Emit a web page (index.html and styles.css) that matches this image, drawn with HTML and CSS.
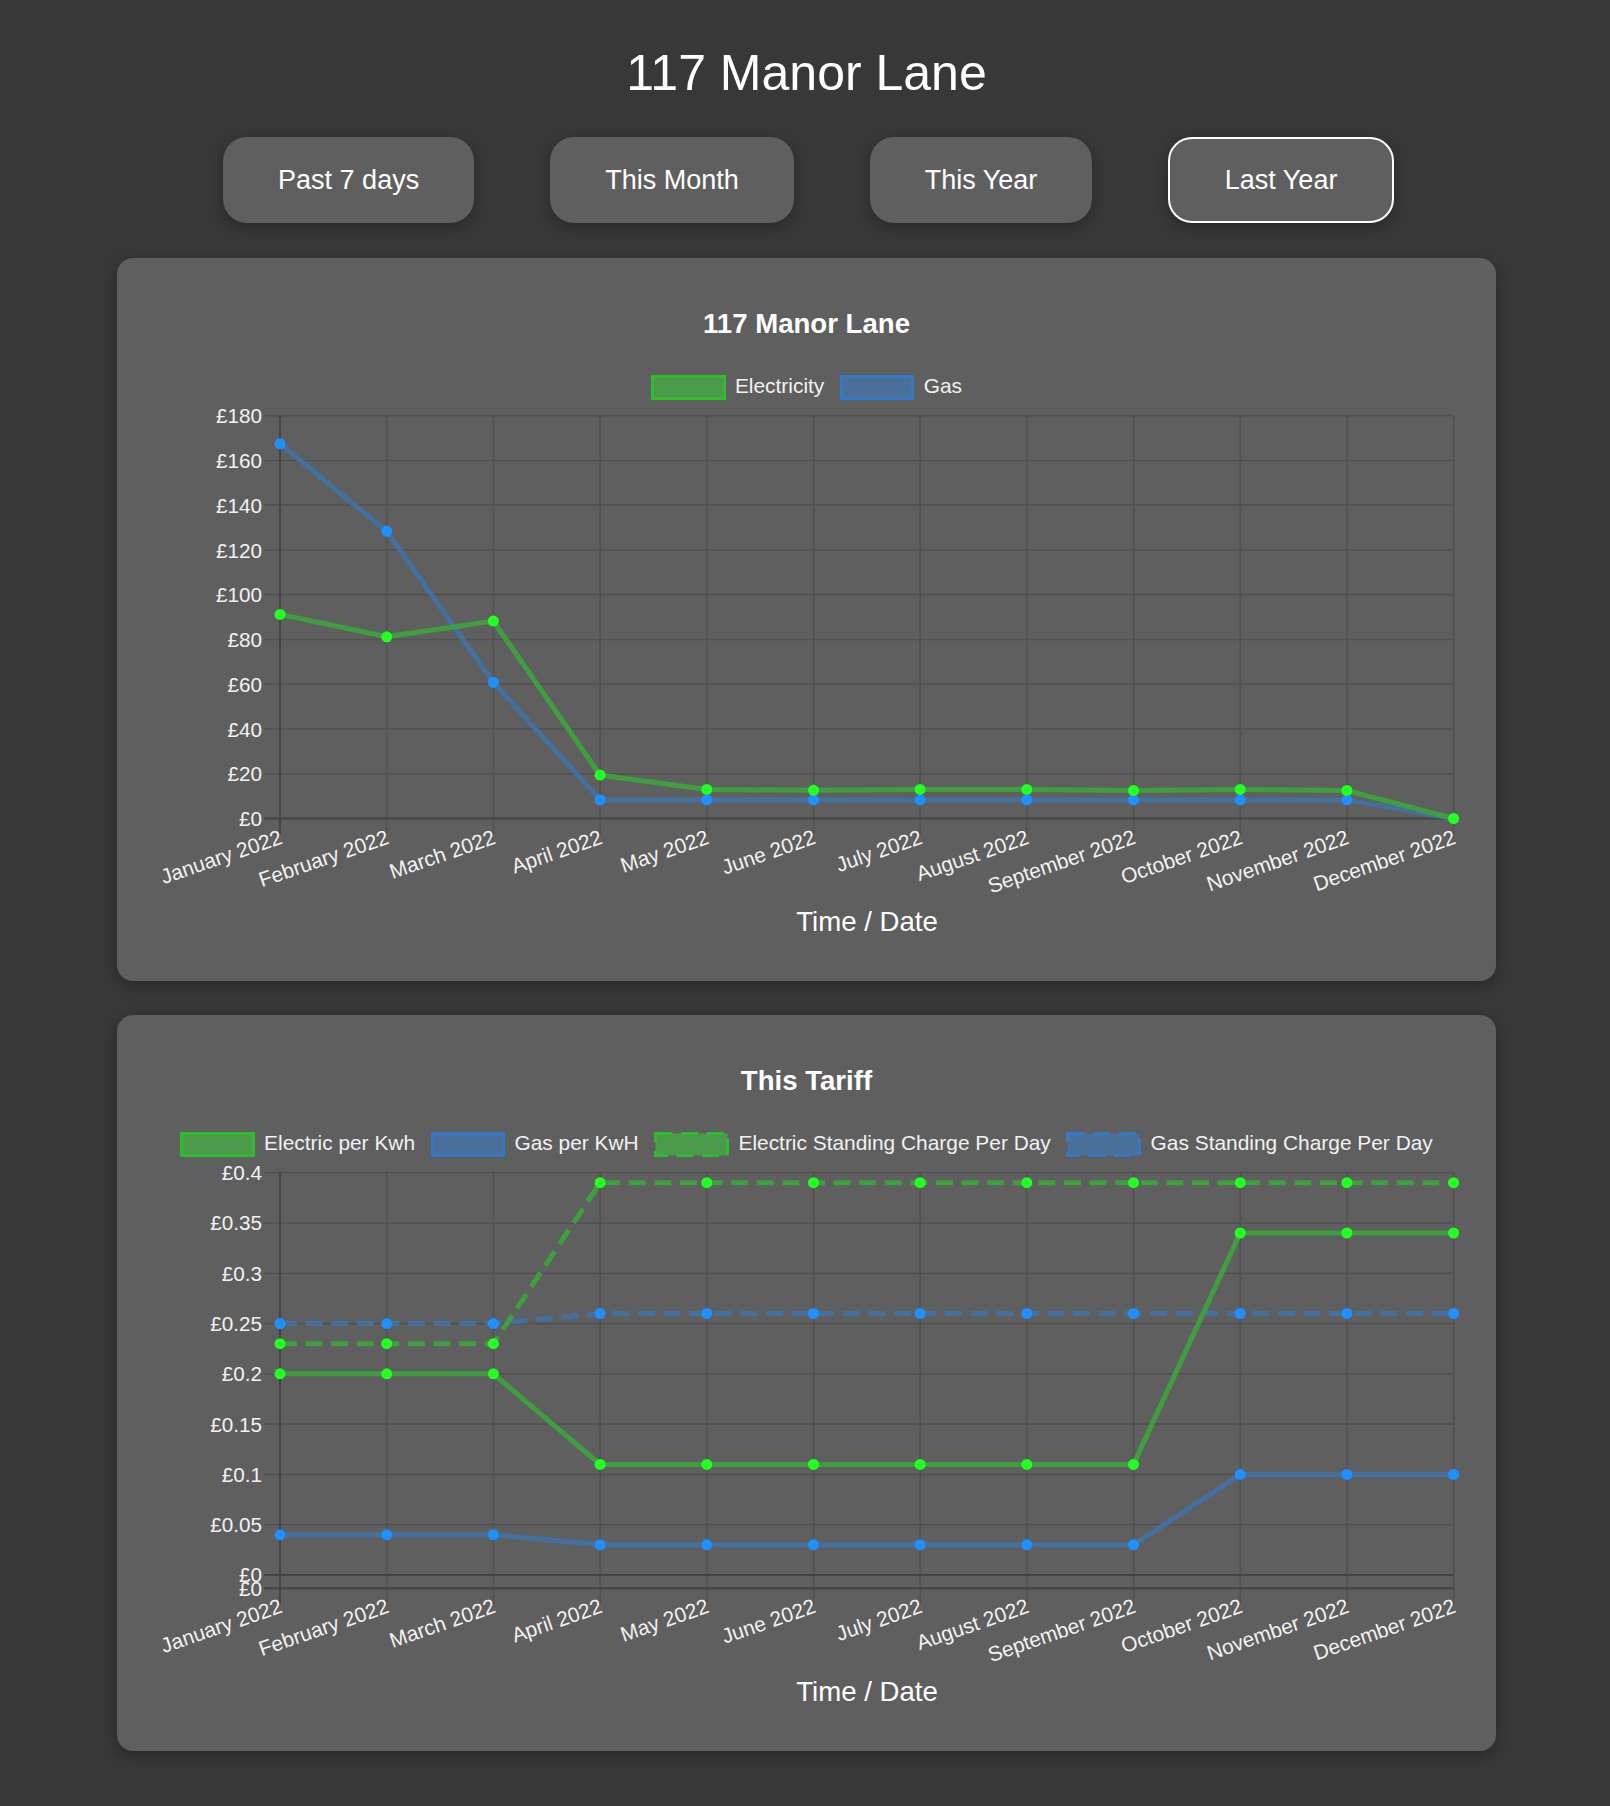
FILE: index.html
```html
<!DOCTYPE html>
<html lang="en">
<head>
<meta charset="utf-8">
<title>117 Manor Lane</title>
<link rel="stylesheet" href="styles.css">
</head>
<body>
<h1 class="page-title">117 Manor Lane</h1>
<div class="controls">
  <button class="range-btn">Past 7 days</button>
  <button class="range-btn">This Month</button>
  <button class="range-btn">This Year</button>
  <button class="range-btn active">Last Year</button>
</div>

<section class="card">
  <h2 class="chart-title">117 Manor Lane</h2>
  <ul class="legend">
    <li class="legend-item"><span class="swatch swatch-green"></span><span class="legend-label">Electricity</span></li>
    <li class="legend-item"><span class="swatch swatch-blue"></span><span class="legend-label">Gas</span></li>
  </ul>
  <svg class="plot" viewBox="117 400 1379 500" width="1379" height="500">
    <path class="grid" d="M264 415.7H1453.6M264 460.5H1453.6M264 505.2H1453.6M264 550H1453.6M264 594.7H1453.6M264 639.5H1453.6M264 684.2H1453.6M264 729H1453.6M264 773.8H1453.6"/>
    <path class="grid" d="M386.7 415.7V834.5M493.4 415.7V834.5M600.1 415.7V834.5M706.8 415.7V834.5M813.5 415.7V834.5M920.1 415.7V834.5M1026.8 415.7V834.5M1133.5 415.7V834.5M1240.2 415.7V834.5M1346.9 415.7V834.5M1453.6 415.7V834.5"/>
    <path class="axis" d="M264 818.5H1453.6M280 415.7V834.5"/>
    <g class="yl">
      <text x="262" y="415.7">£180</text>
      <text x="262" y="460.5">£160</text>
      <text x="262" y="505.2">£140</text>
      <text x="262" y="550">£120</text>
      <text x="262" y="594.7">£100</text>
      <text x="262" y="639.5">£80</text>
      <text x="262" y="684.2">£60</text>
      <text x="262" y="729">£40</text>
      <text x="262" y="773.8">£20</text>
      <text x="262" y="818.5">£0</text>
    </g>
    <g class="xl">
      <text transform="translate(281 836) rotate(-19)">January 2022</text>
      <text transform="translate(387.7 836) rotate(-19)">February 2022</text>
      <text transform="translate(494.4 836) rotate(-19)">March 2022</text>
      <text transform="translate(601.1 836) rotate(-19)">April 2022</text>
      <text transform="translate(707.8 836) rotate(-19)">May 2022</text>
      <text transform="translate(814.5 836) rotate(-19)">June 2022</text>
      <text transform="translate(921.1 836) rotate(-19)">July 2022</text>
      <text transform="translate(1027.8 836) rotate(-19)">August 2022</text>
      <text transform="translate(1134.5 836) rotate(-19)">September 2022</text>
      <text transform="translate(1241.2 836) rotate(-19)">October 2022</text>
      <text transform="translate(1347.9 836) rotate(-19)">November 2022</text>
      <text transform="translate(1454.6 836) rotate(-19)">December 2022</text>
    </g>
    <polyline class="line-blue" points="280,443.7 386.7,531.2 493.4,682.4 600.1,799.9 706.8,799.9 813.5,799.9 920.1,799.9 1026.8,799.9 1133.5,799.9 1240.2,799.9 1346.9,799.9 1453.6,818.5"/>
    <g class="pt-blue">
      <circle cx="280" cy="443.7" r="5.5"/><circle cx="386.7" cy="531.2" r="5.5"/><circle cx="493.4" cy="682.4" r="5.5"/><circle cx="600.1" cy="799.9" r="5.5"/><circle cx="706.8" cy="799.9" r="5.5"/><circle cx="813.5" cy="799.9" r="5.5"/><circle cx="920.1" cy="799.9" r="5.5"/><circle cx="1026.8" cy="799.9" r="5.5"/><circle cx="1133.5" cy="799.9" r="5.5"/><circle cx="1240.2" cy="799.9" r="5.5"/><circle cx="1346.9" cy="799.9" r="5.5"/><circle cx="1453.6" cy="818.5" r="5.5"/>
    </g>
    <polyline class="line-green" points="280,614.4 386.7,636.8 493.4,621.1 600.1,775.1 706.8,789.4 813.5,790.3 920.1,789.4 1026.8,789.4 1133.5,790.5 1240.2,789.4 1346.9,790.5 1453.6,818.5"/>
    <g class="pt-green">
      <circle cx="280" cy="614.4" r="5.5"/><circle cx="386.7" cy="636.8" r="5.5"/><circle cx="493.4" cy="621.1" r="5.5"/><circle cx="600.1" cy="775.1" r="5.5"/><circle cx="706.8" cy="789.4" r="5.5"/><circle cx="813.5" cy="790.3" r="5.5"/><circle cx="920.1" cy="789.4" r="5.5"/><circle cx="1026.8" cy="789.4" r="5.5"/><circle cx="1133.5" cy="790.5" r="5.5"/><circle cx="1240.2" cy="789.4" r="5.5"/><circle cx="1346.9" cy="790.5" r="5.5"/><circle cx="1453.6" cy="818.5" r="5.5"/>
    </g>
  </svg>
  <div class="axis-title">Time / Date</div>
</section>

<section class="card">
  <h2 class="chart-title">This Tariff</h2>
  <ul class="legend">
    <li class="legend-item"><span class="swatch swatch-green"></span><span class="legend-label">Electric per Kwh</span></li>
    <li class="legend-item"><span class="swatch swatch-blue"></span><span class="legend-label">Gas per KwH</span></li>
    <li class="legend-item"><svg class="swatch-svg" viewBox="0 0 75 25" width="75" height="25"><rect class="dash-green" x="1.5" y="1.5" width="72" height="22"/></svg><span class="legend-label">Electric Standing Charge Per Day</span></li>
    <li class="legend-item"><svg class="swatch-svg" viewBox="0 0 75 25" width="75" height="25"><rect class="dash-blue" x="1.5" y="1.5" width="72" height="22"/></svg><span class="legend-label">Gas Standing Charge Per Day</span></li>
  </ul>
  <svg class="plot" viewBox="117 1157 1379 512.8" width="1379" height="512.8">
    <path class="grid" d="M264 1172.7H1453.6M264 1223H1453.6M264 1273.3H1453.6M264 1323.6H1453.6M264 1373.9H1453.6M264 1424.2H1453.6M264 1474.4H1453.6M264 1524.7H1453.6"/>
    <path class="grid" d="M386.7 1172.7V1604.3M493.4 1172.7V1604.3M600.1 1172.7V1604.3M706.8 1172.7V1604.3M813.5 1172.7V1604.3M920.1 1172.7V1604.3M1026.8 1172.7V1604.3M1133.5 1172.7V1604.3M1240.2 1172.7V1604.3M1346.9 1172.7V1604.3M1453.6 1172.7V1604.3"/>
    <path class="axis" d="M264 1575H1453.6M264 1588.3H1453.6M280 1172.7V1604.3"/>
    <g class="yl">
      <text x="262" y="1172.7">£0.4</text>
      <text x="262" y="1223">£0.35</text>
      <text x="262" y="1273.3">£0.3</text>
      <text x="262" y="1323.6">£0.25</text>
      <text x="262" y="1373.9">£0.2</text>
      <text x="262" y="1424.2">£0.15</text>
      <text x="262" y="1474.4">£0.1</text>
      <text x="262" y="1524.7">£0.05</text>
      <text x="262" y="1575">£0</text>
      <text x="262" y="1588.3">£0</text>
    </g>
    <g class="xl">
      <text transform="translate(281 1605) rotate(-19)">January 2022</text>
      <text transform="translate(387.7 1605) rotate(-19)">February 2022</text>
      <text transform="translate(494.4 1605) rotate(-19)">March 2022</text>
      <text transform="translate(601.1 1605) rotate(-19)">April 2022</text>
      <text transform="translate(707.8 1605) rotate(-19)">May 2022</text>
      <text transform="translate(814.5 1605) rotate(-19)">June 2022</text>
      <text transform="translate(921.1 1605) rotate(-19)">July 2022</text>
      <text transform="translate(1027.8 1605) rotate(-19)">August 2022</text>
      <text transform="translate(1134.5 1605) rotate(-19)">September 2022</text>
      <text transform="translate(1241.2 1605) rotate(-19)">October 2022</text>
      <text transform="translate(1347.9 1605) rotate(-19)">November 2022</text>
      <text transform="translate(1454.6 1605) rotate(-19)">December 2022</text>
    </g>
    <polyline class="line-blue dashed" points="280,1323.6 386.7,1323.6 493.4,1323.6 600.1,1313.5 706.8,1313.5 813.5,1313.5 920.1,1313.5 1026.8,1313.5 1133.5,1313.5 1240.2,1313.5 1346.9,1313.5 1453.6,1313.5"/>
    <g class="pt-blue">
      <circle cx="280" cy="1323.6" r="5.5"/><circle cx="386.7" cy="1323.6" r="5.5"/><circle cx="493.4" cy="1323.6" r="5.5"/><circle cx="600.1" cy="1313.5" r="5.5"/><circle cx="706.8" cy="1313.5" r="5.5"/><circle cx="813.5" cy="1313.5" r="5.5"/><circle cx="920.1" cy="1313.5" r="5.5"/><circle cx="1026.8" cy="1313.5" r="5.5"/><circle cx="1133.5" cy="1313.5" r="5.5"/><circle cx="1240.2" cy="1313.5" r="5.5"/><circle cx="1346.9" cy="1313.5" r="5.5"/><circle cx="1453.6" cy="1313.5" r="5.5"/>
    </g>
    <polyline class="line-green dashed" points="280,1343.7 386.7,1343.7 493.4,1343.7 600.1,1182.7 706.8,1182.7 813.5,1182.7 920.1,1182.7 1026.8,1182.7 1133.5,1182.7 1240.2,1182.7 1346.9,1182.7 1453.6,1182.7"/>
    <g class="pt-green">
      <circle cx="280" cy="1343.7" r="5.5"/><circle cx="386.7" cy="1343.7" r="5.5"/><circle cx="493.4" cy="1343.7" r="5.5"/><circle cx="600.1" cy="1182.7" r="5.5"/><circle cx="706.8" cy="1182.7" r="5.5"/><circle cx="813.5" cy="1182.7" r="5.5"/><circle cx="920.1" cy="1182.7" r="5.5"/><circle cx="1026.8" cy="1182.7" r="5.5"/><circle cx="1133.5" cy="1182.7" r="5.5"/><circle cx="1240.2" cy="1182.7" r="5.5"/><circle cx="1346.9" cy="1182.7" r="5.5"/><circle cx="1453.6" cy="1182.7" r="5.5"/>
    </g>
    <polyline class="line-blue" points="280,1534.8 386.7,1534.8 493.4,1534.8 600.1,1544.8 706.8,1544.8 813.5,1544.8 920.1,1544.8 1026.8,1544.8 1133.5,1544.8 1240.2,1474.4 1346.9,1474.4 1453.6,1474.4"/>
    <g class="pt-blue">
      <circle cx="280" cy="1534.8" r="5.5"/><circle cx="386.7" cy="1534.8" r="5.5"/><circle cx="493.4" cy="1534.8" r="5.5"/><circle cx="600.1" cy="1544.8" r="5.5"/><circle cx="706.8" cy="1544.8" r="5.5"/><circle cx="813.5" cy="1544.8" r="5.5"/><circle cx="920.1" cy="1544.8" r="5.5"/><circle cx="1026.8" cy="1544.8" r="5.5"/><circle cx="1133.5" cy="1544.8" r="5.5"/><circle cx="1240.2" cy="1474.4" r="5.5"/><circle cx="1346.9" cy="1474.4" r="5.5"/><circle cx="1453.6" cy="1474.4" r="5.5"/>
    </g>
    <polyline class="line-green" points="280,1373.8 386.7,1373.8 493.4,1373.8 600.1,1464.4 706.8,1464.4 813.5,1464.4 920.1,1464.4 1026.8,1464.4 1133.5,1464.4 1240.2,1233 1346.9,1233 1453.6,1233"/>
    <g class="pt-green">
      <circle cx="280" cy="1373.8" r="5.5"/><circle cx="386.7" cy="1373.8" r="5.5"/><circle cx="493.4" cy="1373.8" r="5.5"/><circle cx="600.1" cy="1464.4" r="5.5"/><circle cx="706.8" cy="1464.4" r="5.5"/><circle cx="813.5" cy="1464.4" r="5.5"/><circle cx="920.1" cy="1464.4" r="5.5"/><circle cx="1026.8" cy="1464.4" r="5.5"/><circle cx="1133.5" cy="1464.4" r="5.5"/><circle cx="1240.2" cy="1233" r="5.5"/><circle cx="1346.9" cy="1233" r="5.5"/><circle cx="1453.6" cy="1233" r="5.5"/>
    </g>
  </svg>
  <div class="axis-title">Time / Date</div>
</section>
</body>
</html>
```

FILE: styles.css
```css
* { box-sizing: border-box; }

body {
  margin: 0;
  padding: 0 0 40px 3px;
  background: #383838;
  font-family: "Liberation Sans", Arial, Helvetica, sans-serif;
  color: #ffffff;
}

.page-title {
  margin: 0;
  padding-top: 48px;
  font-size: 50px;
  line-height: 50px;
  font-weight: 400;
  text-align: center;
}

.controls {
  display: flex;
  justify-content: center;
  gap: 76px;
  margin-top: 38.7px;
  padding-left: 4px;
}

.range-btn {
  font-family: inherit;
  font-size: 27px;
  line-height: 30px;
  color: #ffffff;
  background: #5f5f5f;
  border: 1px solid transparent;
  border-radius: 24px;
  padding: 27px 54px;
  box-shadow: 0 4px 14px rgba(0, 0, 0, 0.3);
  cursor: pointer;
}

.range-btn.active {
  border: 2px solid #ffffff;
  padding: 26px 54.5px;
}

.card {
  width: 1379px;
  margin: 35.3px auto 0;
  background: #5f5f5f;
  border-radius: 16px;
  padding: 51.7px 0 44.9px;
  box-shadow: 0 4px 14px rgba(0, 0, 0, 0.3);
}

.card + .card {
  margin-top: 34px;
}

.chart-title {
  margin: 0;
  font-size: 27.6px;
  line-height: 28px;
  font-weight: 700;
  text-align: center;
}

.legend {
  list-style: none;
  margin: 37.3px 0 0;
  padding: 0;
  height: 25px;
  display: flex;
  justify-content: center;
  gap: 15.5px;
}

.legend-item {
  display: flex;
  align-items: center;
  gap: 9.3px;
  font-size: 20.9px;
  line-height: 25px;
  color: #f2f2f2;
}

.legend-label {
  padding-bottom: 3px;
}

.swatch {
  display: block;
  width: 74.6px;
  height: 25px;
}

.swatch-green {
  background: #4a9a4a;
  border: 3px solid #2fbd2f;
}

.swatch-blue {
  background: #4a6f9a;
  border: 3px solid #3479c6;
}

.swatch-svg {
  display: block;
}

.dash-green {
  fill: #4a9a4a;
  stroke: #2fbd2f;
  stroke-width: 3;
  stroke-dasharray: 17 8.6;
}

.dash-blue {
  fill: #4a6f9a;
  stroke: #3479c6;
  stroke-width: 3;
  stroke-dasharray: 17 8.6;
}

.plot {
  display: block;
}

.grid {
  fill: none;
  stroke: #525252;
  stroke-width: 1.7;
}

.axis {
  fill: none;
  stroke: #444444;
  stroke-width: 2;
}

.yl text,
.xl text {
  font-family: "Liberation Sans", Arial, sans-serif;
  font-size: 20.7px;
  fill: #f2f2f2;
  text-anchor: end;
  dominant-baseline: central;
}

.xl text {
  font-size: 20.9px;
}

.line-green {
  fill: none;
  stroke: #3f9e3f;
  stroke-width: 5;
}

.line-blue {
  fill: none;
  stroke: #44709f;
  stroke-width: 5;
}

.dashed {
  stroke-dasharray: 17 8.6;
}

.pt-green circle {
  fill: #22ff22;
}

.pt-blue circle {
  fill: #1e90ff;
}

.axis-title {
  margin-top: 8.1px;
  padding-left: 121px;
  font-size: 27.6px;
  line-height: 28px;
  text-align: center;
}
```
